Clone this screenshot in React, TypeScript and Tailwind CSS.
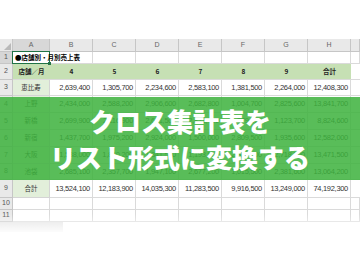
const COLS = ['A', 'B', 'C', 'D', 'E', 'F', 'G', 'H', ''];
const WIDTHS = ['w-[37px]', 'w-[43px]', 'w-[43px]', 'w-[43px]', 'w-[43px]', 'w-[43px]', 'w-[43px]', 'w-[43px]', 'w-[9px]'];

const ROWS = [
  { h: 'h-[16px]', cells: ['恵比寿', '2,639,400', '1,305,700', '2,234,600', '2,583,100', '1,381,500', '2,264,000', '12,408,300'] },
  { h: 'h-[17px]', cells: ['上野', '2,434,000', '2,588,200', '2,906,600', '2,682,800', '1,004,700', '2,825,600', '13,841,700'] },
  { h: 'h-[17px]', cells: ['新橋', '2,699,900', '2,116,900', '2,681,500', '2,823,700', '1,379,500', '1,123,700', '8,824,600'] },
  { h: 'h-[17px]', cells: ['新宿', '1,437,700', '1,975,200', '2,924,000', '1,500,000', '2,809,500', '1,935,600', '12,582,000'] },
  { h: 'h-[17px]', cells: ['大阪', '1,538,000', '1,840,200', '1,341,500', '1,193,900', '2,312,800', '2,718,500', '13,471,500'] },
  { h: 'h-[16px]', cells: ['池袋', '2,685,100', '2,357,700', '1,947,100', '2,677,200', '1,015,500', '2,381,600', '13,064,200'] },
  { h: 'h-[18px]', cells: ['合計', '13,524,100', '12,183,900', '14,035,300', '11,283,500', '9,916,500', '13,249,000', '74,192,300'] },
];

const jp = { fontFamily: '"Noto Sans CJK JP", "Noto Sans", sans-serif' };
const num = { fontFamily: '"Liberation Sans", Arial, sans-serif' };

function RowHead({ n, dark }: { n: string; dark?: boolean }) {
  return (
    <div
      className={`w-[13px] shrink-0 flex items-center justify-center border-r border-b border-[#c6c6c6] text-[7px] text-[#555] ${dark ? 'bg-[#d6d6d6]' : 'bg-[#e9e9e9]'}`}
      style={num}
    >
      {n}
    </div>
  );
}

export default function App() {
  return (
    <div className="relative w-[360px] h-[270px] overflow-hidden bg-white">
      <div className="h-[39px]" />

      {/* column header */}
      <div className="flex h-[13px]">
        <div className="w-[13px] shrink-0 bg-[#e9e9e9] border-r border-b border-[#c6c6c6] flex items-end justify-end p-[1px]">
          <svg width="7" height="7" viewBox="0 0 7 7">
            <path d="M7 0 L7 7 L0 7 Z" fill="#b9b9b9" />
          </svg>
        </div>
        {COLS.map((c, i) => (
          <div
            key={i}
            className={`${WIDTHS[i]} shrink-0 flex items-center justify-center border-r border-b border-[#c6c6c6] text-[7px] text-[#666] ${i === 0 ? 'bg-[#d8d8d8]' : 'bg-[#e9e9e9]'}`}
            style={num}
          >
            {c}
          </div>
        ))}
      </div>

      {/* row 1 */}
      <div className="flex h-[12px]">
        <RowHead n="1" dark />
        <div className="relative w-[37px] shrink-0 border-r border-b border-[#dadada]">
          <div className="absolute -inset-[1px] border-[1.5px] border-[#217346] z-10" />
          <div className="absolute -right-[2px] -bottom-[2px] w-[3px] h-[3px] bg-[#217346] z-10" />
          <span className="absolute left-[2px] top-0 leading-[11px] whitespace-nowrap text-[6.5px] font-bold text-black z-20" style={jp}>
            ●店舗別・月別売上表
          </span>
        </div>
        {WIDTHS.slice(1).map((w, i) => (
          <div key={i} className={`${w} shrink-0 border-r border-b border-[#dadada] ${i === 0 ? 'border-r-[#dadada]' : ''}`} />
        ))}
      </div>

      {/* row 2 header */}
      <div className="flex h-[16px]">
        <RowHead n="2" />
        {['店舗／月', '4', '5', '6', '7', '8', '9', '合計'].map((t, i) => (
          <div
            key={i}
            className={`${WIDTHS[i]} shrink-0 bg-[#c6e0b4] border-b border-[#dadada] flex items-center justify-center font-bold text-[6.5px] text-[#222]`}
            style={jp}
          >
            {t}
          </div>
        ))}
        <div className="w-[9px] shrink-0 border-b border-[#dadada]" />
      </div>

      {/* data rows */}
      {ROWS.map((r, ri) => (
        <div key={ri} className={`flex ${r.h}`}>
          <RowHead n={String(ri + 3)} />
          {r.cells.map((t, i) =>
            i === 0 ? (
              <div
                key={i}
                className="w-[37px] shrink-0 bg-[#e2efda] border-r border-b border-[#d4d4d4] flex items-center justify-center text-[6.5px] text-[#333]"
                style={jp}
              >
                {t}
              </div>
            ) : (
              <div
                key={i}
                className={`${WIDTHS[i]} shrink-0 border-r border-b border-[#dadada] flex items-center justify-end pr-[2px] text-[7.5px] tracking-[-0.3px] text-[#333]`}
                style={num}
              >
                {t}
              </div>
            )
          )}
          <div className="w-[9px] shrink-0 border-b border-[#dadada]" />
        </div>
      ))}

      {/* empty rows */}
      {['10', '11'].map((n) => (
        <div key={n} className="flex h-[12px]">
          <RowHead n={n} />
          {WIDTHS.map((w, i) => (
            <div key={i} className={`${w} shrink-0 border-r border-b border-[#dadada]`} />
          ))}
        </div>
      ))}

      <div className="flex h-[10px]">
        <div className="w-[63px] bg-[#e2e2e2]" />
        <div className="flex-1" />
      </div>

      {/* fade out at bottom */}
      <div className="absolute left-0 right-0 top-[214px] h-[20px] bg-gradient-to-b from-white/0 to-white" />

      {/* title banner */}
      <div
        className="absolute left-0 right-0 top-[97px] h-[83px] bg-[rgba(62,178,62,0.86)] flex flex-col items-center justify-center text-white font-black text-[26px] leading-[36px]"
        style={jp}
      >
        <div>クロス集計表を</div>
        <div>リスト形式に変換する</div>
      </div>
    </div>
  );
}
